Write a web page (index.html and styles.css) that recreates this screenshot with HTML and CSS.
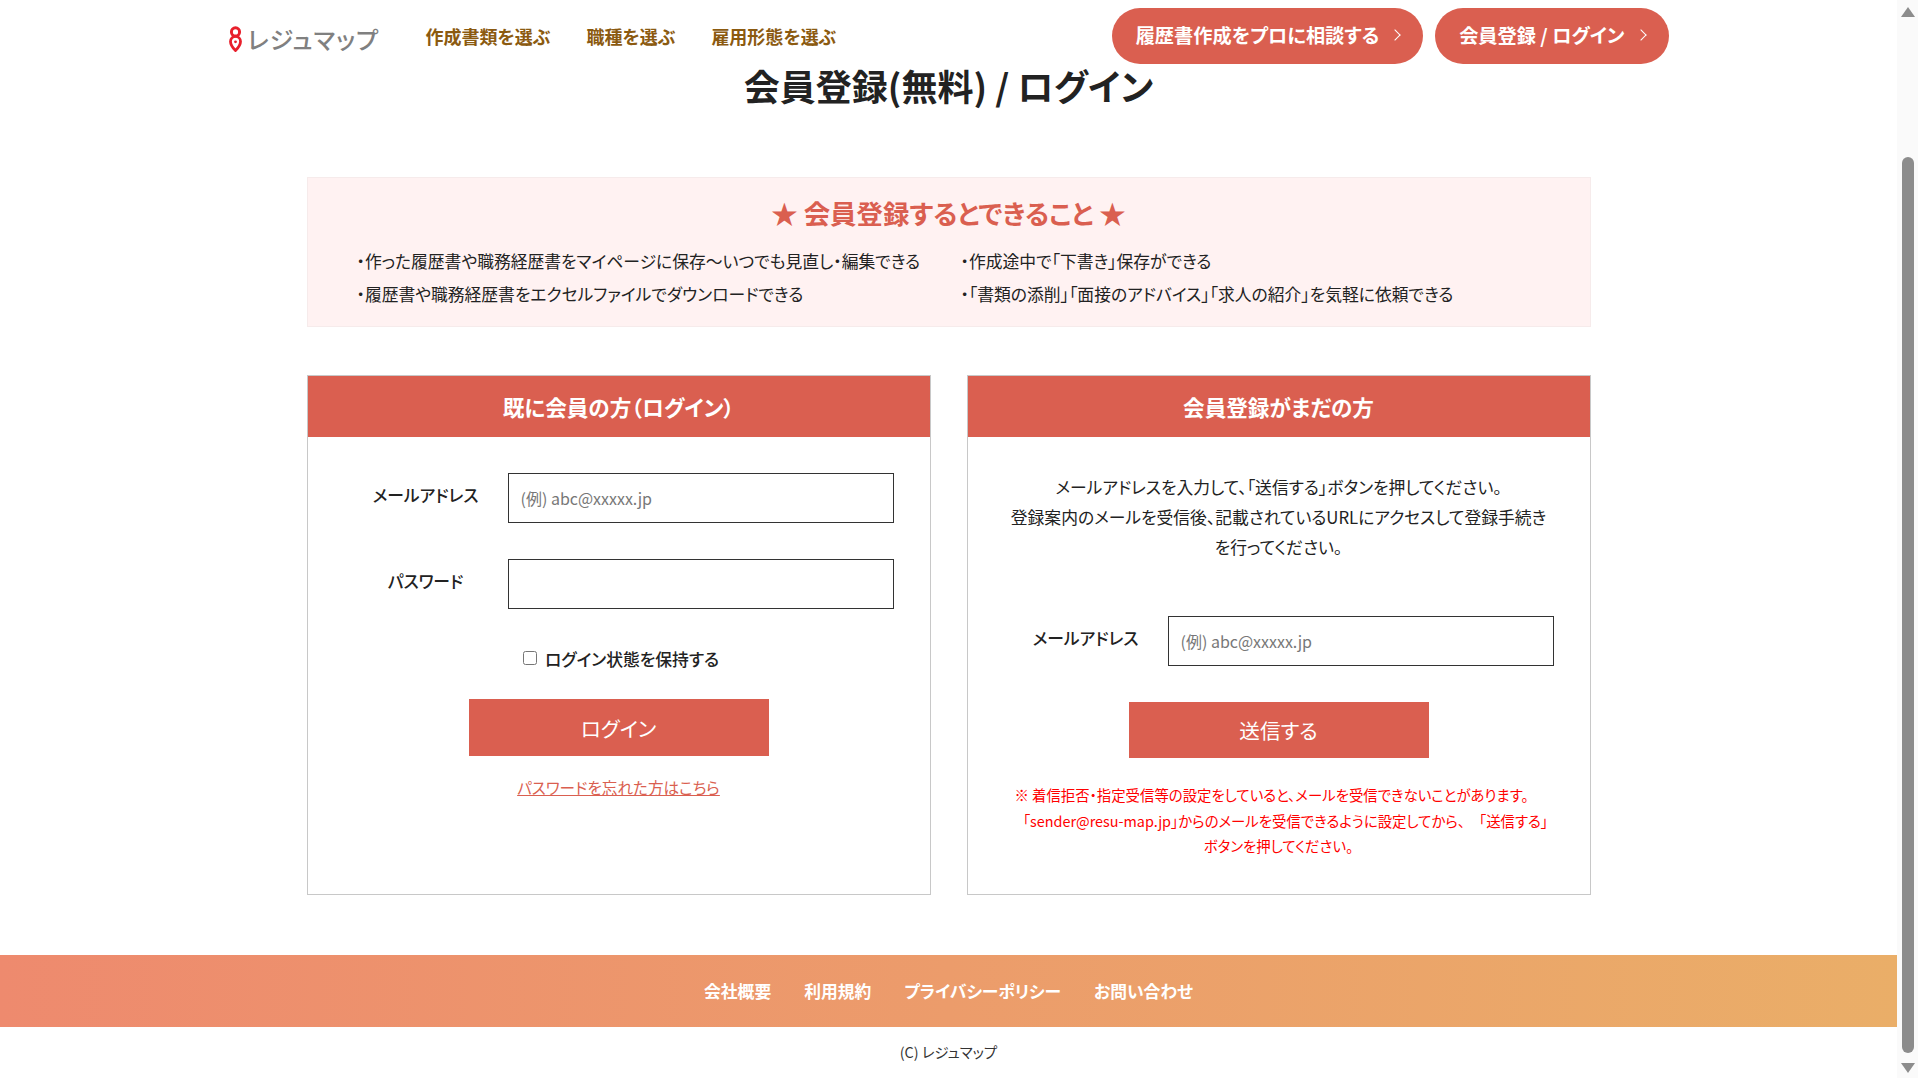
FILE: index.html
```html
<!doctype html>
<html lang="ja">
<head>
	<title>会員登録(無料) / ログイン</title>
	<meta charset="utf-8" />
	<link rel="stylesheet" href="styles.css">
</head>
<body>
	<div class="page">
		<header class="header">
			<a class="logo" href="#">
				<svg class="logo-mark" viewBox="0 0 14 28" width="13" height="26">
					<circle cx="7" cy="6.4" r="4.4" fill="none" stroke="#e8202c" stroke-width="3.2"/>
					<path d="M7 26.4C4.2 23.6 1.6 20.2 1.6 16.6C1.6 13.6 4 11.2 7 11.2C10 11.2 12.4 13.6 12.4 16.6C12.4 20.2 9.8 23.6 7 26.4Z" fill="none" stroke="#e8202c" stroke-width="3"/>
					<circle cx="7" cy="17" r="1.5" fill="#e8202c"/>
				</svg>
				<span class="logo-text">レジュマップ</span>
			</a>
			<nav class="nav">
				<a href="#">作成書類を選ぶ</a>
				<a href="#">職種を選ぶ</a>
				<a href="#">雇用形態を選ぶ</a>
			</nav>
			<div class="header-btns">
				<a class="pill" href="#">履歴書作成をプロに相談する<span class="chev"></span></a>
				<a class="pill" href="#">会員登録 / ログイン<span class="chev"></span></a>
			</div>
		</header>

		<h1 class="title">会員登録(無料) / ログイン</h1>

		<main class="content">
			<section class="merit">
				<h2>★ 会員登録するとできること ★</h2>
				<ul>
					<li>・作った履歴書や職務経歴書をマイページに保存〜いつでも見直し・編集できる</li>
					<li>・作成途中で「下書き」保存ができる</li>
					<li>・履歴書や職務経歴書をエクセルファイルでダウンロードできる</li>
					<li>・「書類の添削」「面接のアドバイス」「求人の紹介」を気軽に依頼できる</li>
				</ul>
			</section>

			<div class="cards">
				<section class="card">
					<h3>既に会員の方（ログイン）</h3>
					<form class="card-body">
						<div class="field">
							<label>メールアドレス</label>
							<input type="text" placeholder="(例) abc@xxxxx.jp">
						</div>
						<div class="field">
							<label>パスワード</label>
							<input type="password">
						</div>
						<label class="keep"><input type="checkbox">ログイン状態を保持する</label>
						<button class="submit" type="button">ログイン</button>
						<a class="forgot" href="#">パスワードを忘れた方はこちら</a>
					</form>
				</section>

				<section class="card">
					<h3>会員登録がまだの方</h3>
					<form class="card-body">
						<p class="lead">メールアドレスを入力して、「送信する」ボタンを押してください。<br>登録案内のメールを受信後、記載されているURLにアクセスして登録手続きを行ってください。</p>
						<div class="field">
							<label>メールアドレス</label>
							<input type="text" placeholder="(例) abc@xxxxx.jp">
						</div>
						<button class="submit submit-send" type="button">送信する</button>
						<p class="notice">※ 着信拒否・指定受信等の設定をしていると、メールを受信できないことがあります。<span class="pad"></span><br><span class="pad"></span>「sender@resu-map.jp」からのメールを受信できるように設定してから、<span class="pad"></span>「送信する」<br>ボタンを押してください。</p>
					</form>
				</section>
			</div>
		</main>

		<footer>
			<div class="foot-links">
				<a href="#">会社概要</a>
				<a href="#">利用規約</a>
				<a href="#">プライバシーポリシー</a>
				<a href="#">お問い合わせ</a>
			</div>
			<p class="copy">(C) レジュマップ</p>
		</footer>
	</div>

	<div class="scrollbar">
		<svg viewBox="0 0 14 10" width="14" height="10"><path d="M7 0L14 10H0Z" fill="#8c8c8c"/></svg>
		<div class="thumb"></div>
		<svg viewBox="0 0 14 10" width="14" height="10"><path d="M0 0H14L7 10Z" fill="#8c8c8c"/></svg>
	</div>
</body>
</html>
```

FILE: styles.css
```css
html, body {
	height: 100%;
}

body {
	margin: 0;
	display: flex;
	height: 1078px;
	overflow: hidden;
	background-color: #fff;
	color: #222;
	font-family: "Noto Sans CJK JP", "Noto Sans", sans-serif;
	font-feature-settings: "palt";
}

a {
	text-decoration: none;
}

.page {
	flex: 1;
	min-width: 0;
}

/* header */
.header {
	display: flex;
	align-items: center;
	width: 1440px;
	height: 56px;
	margin: 0 auto;
	padding-top: 8px;
}

.logo {
	display: flex;
	align-items: center;
	gap: 6px;
	width: 197px;
	padding-top: 6px;
}

.logo-text {
	font-size: 24px;
	line-height: 28px;
	font-weight: 500;
	letter-spacing: 1px;
	color: #808080;
}

.nav {
	display: flex;
	gap: 36px;
}

.nav a {
	font-size: 18px;
	font-weight: 700;
	color: #8b5a10;
}

.header-btns {
	display: flex;
	gap: 12px;
	margin-left: auto;
}

.pill {
	display: flex;
	align-items: center;
	box-sizing: border-box;
	height: 56px;
	padding: 0 24px 3px 24px;
	border-radius: 28px;
	background-color: #da5f50;
	color: #fff;
	font-size: 19.2px;
	font-weight: 700;
}

.chev {
	width: 7px;
	height: 7px;
	margin-left: 12px;
	border-top: 1px solid #fff;
	border-right: 1px solid #fff;
	transform: rotate(45deg);
}

.title {
	margin: -2px 0 0;
	font-size: 36px;
	line-height: 46px;
	font-weight: 700;
	text-align: center;
}

/* main */
.content {
	width: 1284px;
	margin: 69px auto 60px;
}

.merit {
	height: 150px;
	box-sizing: border-box;
	padding-top: 15px;
	background-color: #fff2f2;
	border: 1px solid #f6ebeb;
}

.merit h2 {
	margin: 0 0 12px;
	font-size: 26.4px;
	line-height: 40px;
	font-weight: 700;
	color: #da5f50;
	text-align: center;
}

.merit ul {
	display: grid;
	grid-template-columns: 604px 1fr;
	margin: 0;
	padding: 0 0 0 49px;
	list-style: none;
	font-size: 16.8px;
	line-height: 33px;
}

.cards {
	display: flex;
	gap: 36px;
	margin-top: 48px;
}

.card {
	flex: 1;
	height: 520px;
	box-sizing: border-box;
	border: 1px solid #c8c8c8;
}

.card h3 {
	margin: 0;
	height: 61px;
	background-color: #da5f50;
	color: #fff;
	font-size: 21.6px;
	line-height: 61px;
	font-weight: 700;
	text-align: center;
}

.card-body {
	display: flex;
	flex-direction: column;
	align-items: center;
	padding: 36px 36px 0;
}

.field {
	display: flex;
	align-items: center;
	align-self: stretch;
	margin-bottom: 36px;
}

.field label {
	width: 164px;
	padding-bottom: 6px;
	font-size: 16.8px;
	font-weight: 500;
	text-align: center;
	color: #222;
}

.field input {
	flex: 1;
	min-width: 0;
	height: 50px;
	box-sizing: border-box;
	padding: 0 12px;
	border: 1px solid #333;
	border-radius: 0;
	font-family: inherit;
	font-feature-settings: inherit;
	font-size: 16px;
}

.field input::placeholder {
	color: #777;
}

.keep {
	display: flex;
	align-items: center;
	gap: 8px;
	margin-left: 5px;
	font-size: 16.8px;
	font-weight: 500;
	line-height: 28px;
}

.keep input {
	width: 14px;
	height: 14px;
	margin: -3px 0 0;
}

.submit {
	width: 300px;
	height: 57px;
	margin-top: 26px;
	padding: 0;
	border: 0;
	background-color: #da5f50;
	color: #fff;
	font-family: inherit;
	font-feature-settings: inherit;
	font-size: 20.6px;
	font-weight: 400;
}

.forgot {
	margin-top: 19px;
	font-size: 15.6px;
	line-height: 24px;
	color: #da5f50;
	text-decoration: underline;
}

.lead {
	margin: -1px 0 54px;
	font-size: 16.8px;
	line-height: 30px;
	text-align: center;
}

.submit-send {
	height: 56px;
	margin-top: 0;
}

.notice {
	margin: 24px 0 0;
	font-size: 14.4px;
	line-height: 25.5px;
	font-weight: 400;
	color: #f00;
	text-align: center;
}

.pad {
	display: inline-block;
	width: 14px;
}

/* footer */
.foot-links {
	display: flex;
	justify-content: center;
	gap: 33px;
	box-sizing: border-box;
	height: 72px;
	padding-bottom: 1px;
	align-items: center;
	background-image: linear-gradient(90deg, #ee8a6e, #eaae68);
}

.foot-links a {
	color: #fff;
	font-size: 16.8px;
	font-weight: 700;
}

.copy {
	margin: 0;
	padding-top: 13px;
	font-size: 14.4px;
	line-height: 24px;
	text-align: center;
	color: #333;
}

/* scrollbar */
.scrollbar {
	display: flex;
	flex-direction: column;
	align-items: center;
	width: 21px;
	padding: 7px 0 5px;
	box-sizing: border-box;
	background-color: #fafafa;
}

.thumb {
	flex: 1;
	width: 12px;
	margin: 140px 0 10px;
	border-radius: 6px;
	background-color: #8c8c8c;
}
```
